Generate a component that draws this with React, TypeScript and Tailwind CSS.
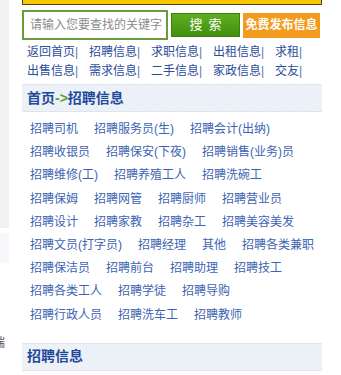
import React from 'react';

const navRows: string[][] = [
  ['返回首页', '招聘信息', '求职信息', '出租信息', '求租'],
  ['出售信息', '需求信息', '二手信息', '家政信息', '交友'],
];

const jobRows: string[][] = [
  ['招聘司机', '招聘服务员(生)', '招聘会计(出纳)'],
  ['招聘收银员', '招聘保安(下夜)', '招聘销售(业务)员'],
  ['招聘维修(工)', '招聘养殖工人', '招聘洗碗工'],
  ['招聘保姆', '招聘网管', '招聘厨师', '招聘营业员'],
  ['招聘设计', '招聘家教', '招聘杂工', '招聘美容美发'],
  ['招聘文员(打字员)', '招聘经理', '其他', '招聘各类兼职'],
  ['招聘保洁员', '招聘前台', '招聘助理', '招聘技工'],
  ['招聘各类工人', '招聘学徒', '招聘导购'],
  ['招聘行政人员', '招聘洗车工', '招聘教师'],
];

const SectionBar: React.FC<{ children: React.ReactNode }> = ({ children }) => {
  return (
    <div className="h-[28px] flex items-center pl-[5px] border-y border-[#dfe5ee] bg-[repeating-linear-gradient(45deg,#eef2f9_0px,#eef2f9_2px,#e8edf6_2px,#e8edf6_3px)] text-[14px] font-bold text-[#1f4a9a]">
      {children}
    </div>
  );
};

const App: React.FC = () => {
  return (
    <div className="flex w-[341px] h-[375px] overflow-hidden bg-white font-['Liberation_Sans','Noto_Sans_CJK_SC',sans-serif]">
      {/* left edge of the neighbouring column */}
      <div className="w-[22px] shrink-0 flex flex-col">
        <div className="w-[9px] h-[228px] bg-[#f1f1f1]" />
        <div className="w-[9px] h-[30px] mt-[5px] bg-[#f6f8fb]" />
        <div className="w-[6px] mt-[72px] overflow-hidden text-[12px] leading-[16px] text-[#555]">
          <span className="block ml-[-7px]">端</span>
        </div>
      </div>

      <div className="w-[300px] shrink-0 flex flex-col">
        <div className="h-[5px] bg-[#f7c600] border-x border-b border-[#4a4426]" />

        <div className="mt-[5px] flex items-center h-[30px]">
          <div className="w-[146px] h-[30px] border-2 border-[#6c9b3d] flex items-center pl-[6px] text-[12px] text-[#8c8c8c]">
            请输入您要查找的关键字
          </div>
          <div className="ml-[3px] w-[69px] h-[24px] flex items-center justify-center bg-gradient-to-b from-[#5fae20] to-[#40900f] border border-[#3d8010] text-white text-[13px] tracking-[6px] pl-[6px]">
            搜索
          </div>
          <div className="ml-[3px] w-[77px] h-[25px] flex items-center justify-center bg-[#f39b1f] text-white text-[12px] font-bold">
            免费发布信息
          </div>
        </div>

        <div className="mt-[3px] pl-[5px] text-[12px] leading-[19px] text-[#2b4e9c]">
          {navRows.map((row, index) => (
            <div className="flex" key={index}>
              {row.map((item, i) => (
                <span className="w-[62px] shrink-0" key={i}>
                  {item}
                  <span className="text-[#5a76b0]">|</span>
                </span>
              ))}
            </div>
          ))}
        </div>

        <div className="mt-[3px]">
          <SectionBar>
            首页<span className="text-[#5aa02a]">-&gt;</span>招聘信息
          </SectionBar>
        </div>

        <div className="pt-[6px] pl-[8px] text-[12px] leading-[23.2px] text-[#3d64b2]">
          {jobRows.map((row, index) => (
            <div className="flex gap-[16px] whitespace-nowrap" key={index}>
              {row.map((item, i) => (
                <span key={i}>{item}</span>
              ))}
            </div>
          ))}
        </div>

        <div className="mt-[16px]">
          <SectionBar>招聘信息</SectionBar>
        </div>
      </div>
    </div>
  );
};

export default App;
